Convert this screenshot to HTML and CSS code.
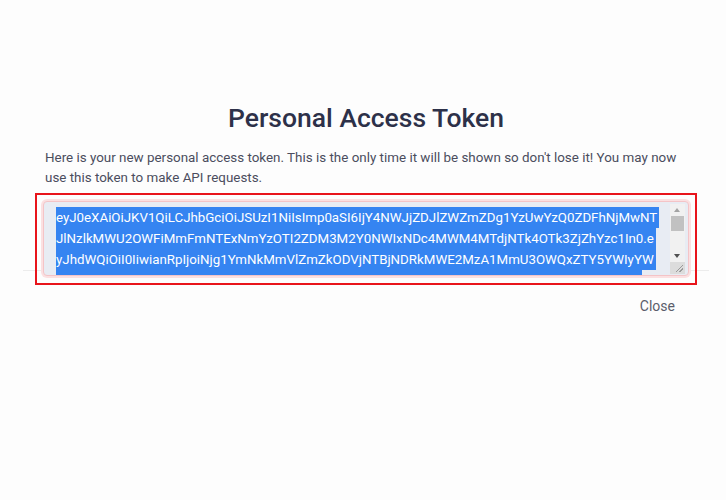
FILE: index.html
```html
<!DOCTYPE html>
<html lang="en">
<head>
    <meta charset="UTF-8">
    <meta name="viewport" content="width=device-width, initial-scale=1.0">
    <title>Personal Access Token</title>
    <link rel="stylesheet" href="styles.css">
</head>
<body>

    <div class="modal">
        <h1>Personal Access Token</h1>

        <p class="intro">Here is your new personal access token. This is the only time it will be shown so don't lose it! You may now use this token to make API requests.</p>

        <div class="token-box">
            <div class="token-field">
                <div class="token-text">
                    <span class="sel">eyJ0eXAiOiJKV1QiLCJhbGciOiJSUzI1NiIsImp0aSI6IjY4NWJjZDJlZWZmZDg1YzUwYzQ0ZDFhNjMwNT</span>
                    <span class="sel">JlNzlkMWU2OWFiMmFmNTExNmYzOTI2ZDM3M2Y0NWIxNDc4MWM4MTdjNTk4OTk3ZjZhYzc1In0.e</span>
                    <span class="sel">yJhdWQiOiI0IiwianRpIjoiNjg1YmNkMmVlZmZkODVjNTBjNDRkMWE2MzA1MmU3OWQxZTY5YWIyYW</span>
                    <span class="sel">IwMTExZTQ2ZjczNmQ0ZTNhYzAyIiwiaWF0IjoxNjI0NDEwNTc3LCJuYmYiOjE2MjQ0MTA1NzcsImV4</span>
                </div>
                <div class="scrollbar">
                    <span class="arrow up"></span>
                    <span class="thumb"></span>
                    <span class="track"></span>
                    <span class="arrow down"></span>
                    <span class="grip"></span>
                </div>
            </div>
        </div>

        <div class="footer">
            <button class="close-btn">Close</button>
        </div>
    </div>

</body>
</html>
```

FILE: styles.css
```css
body {
    font-family: Roboto, "Liberation Sans", sans-serif;
    background-color: #fdfdfd;
    margin: 0;
    padding: 0;
}
.modal {
    width: 662px;
    padding: 0 29px 0 35px;
}
h1 {
    text-align: center;
    color: #2d3149;
    font-size: 26.5px;
    font-weight: 500;
    margin: 102px 0 0;
    line-height: 32px;
}
.intro {
    color: #4b4d5e;
    font-size: 13.4px;
    line-height: 20px;
    margin: 14px 0 0 10px;
    width: 645px;
}
.token-box {
    position: relative;
    z-index: 1;
    margin-top: 5px;
    border: 2px solid #e8141b;
    padding: 6px 6px 7px 6px;
}
.token-field {
    display: flex;
    height: 73px;
    background-color: #e8ecf3;
    border: 1px solid #f4c4c7;
    border-radius: 4px;
    box-shadow: 0 0 0 2px #fbe0e1;
    overflow: hidden;
}
.token-text {
    flex: 1;
    padding: 5px 0 0 12px;
    font-size: 13.3px;
    line-height: 21px;
    color: #ffffff;
    overflow: hidden;
}
.sel {
    display: block;
    width: fit-content;
    background-color: #3584f1;
    white-space: nowrap;
    padding-right: 2px;
}
.scrollbar {
    width: 15px;
    margin: 2px 3px 1px 8px;
    display: flex;
    flex-direction: column;
    background-color: #f1f1f1;
}
.arrow {
    height: 12px;
    position: relative;
}
.arrow::after {
    content: "";
    position: absolute;
    left: 4px;
    border-left: 3.5px solid transparent;
    border-right: 3.5px solid transparent;
}
.arrow.up::after {
    top: 4px;
    border-bottom: 4px solid #a3a3a3;
}
.arrow.down::after {
    top: 4px;
    border-top: 4px solid #505050;
}
.thumb {
    height: 15px;
    margin: 0 1px;
    background-color: #c1c1c1;
}
.track {
    flex: 1;
}
.grip {
    height: 12px;
    background-color: #dcdcdc;
    position: relative;
}
.grip::after {
    content: "";
    position: absolute;
    right: 2px;
    bottom: 2px;
    width: 7px;
    height: 7px;
    background: linear-gradient(135deg, transparent 0 45%, #9a9a9a 45% 55%, transparent 55% 70%, #9a9a9a 70% 80%, transparent 80%);
}
.footer {
    margin: -15px -12px 0 -12px;
    border-top: 1px solid #ececec;
    padding-top: 23px;
    text-align: right;
}
.close-btn {
    font-family: inherit;
    font-size: 14px;
    color: #5b5d6b;
    background: none;
    border: none;
    padding: 4px 34px 4px 8px;
    cursor: pointer;
}
```
